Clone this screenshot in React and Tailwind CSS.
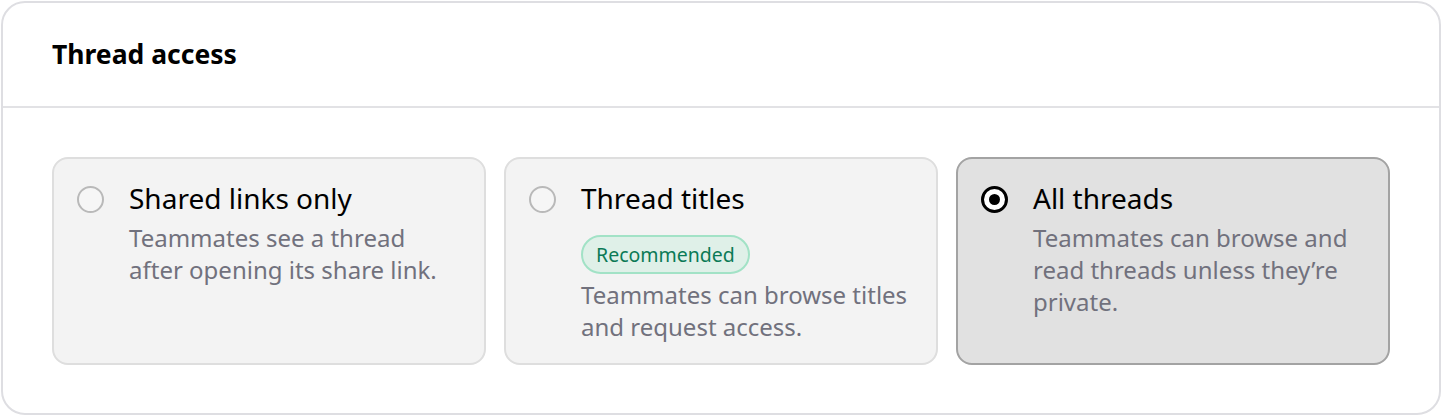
const options = [
  {
    id: "shared",
    title: "Shared links only",
    desc: "Teammates see a thread after opening its share link.",
  },
  {
    id: "titles",
    title: "Thread titles",
    badge: "Recommended",
    desc: "Teammates can browse titles and request access.",
  },
  {
    id: "all",
    title: "All threads",
    desc: "Teammates can browse and read threads unless they’re private.",
  },
];

export default function App() {
  const selected = "all";

  return (
    <div className="p-px" style={{ fontFamily: '"Noto Sans", "Open Sans", sans-serif' }}>
      <div className="h-[414px] rounded-[24px] border-2 border-[#dedee2] bg-white flex flex-col">
        <div className="h-[105px] border-b-2 border-[#e2e2e5] pl-[49px] flex items-center">
          <h2 className="text-[26.5px] font-bold text-black">Thread access</h2>
        </div>
        <div className="flex-1 px-[49px] pt-[49px] pb-[48px] grid grid-cols-3 gap-[18px]">
          {options.map((o) => {
            const on = o.id === selected;
            return (
              <div
                key={o.id}
                className={`rounded-[16px] border-2 pl-[23px] pr-[20px] pt-[21px] flex gap-[25px] ${
                  on ? "bg-[#e1e1e1] border-[#a3a3a3]" : "bg-[#f3f3f3] border-[#dedede]"
                }`}
              >
                <div className="pt-[6px]">
                  {on ? (
                    <div className="w-[27px] h-[27px] rounded-full border-[3px] border-black bg-white flex items-center justify-center">
                      <div className="w-[11px] h-[11px] rounded-full bg-black" />
                    </div>
                  ) : (
                    <div className="w-[27px] h-[27px] rounded-full border-2 border-[#b9b9b9] bg-[#f6f6f6]" />
                  )}
                </div>
                <div className="flex flex-col min-w-0">
                  <div className="text-[28px] leading-[36px] text-black">{o.title}</div>
                  {o.badge && (
                    <div className="mt-[19px] self-start rounded-full border-2 border-[#a2e2c6] bg-[#dff0e8] px-[13px] h-[39px] flex items-center text-[19.5px] text-[#0b7a56]">
                      {o.badge}
                    </div>
                  )}
                  <p className={`${o.badge ? "mt-[5px]" : "mt-[6px]"} text-[24px] leading-[32px] text-[#71717d]`}>{o.desc}</p>
                </div>
              </div>
            );
          })}
        </div>
      </div>
    </div>
  );
}
